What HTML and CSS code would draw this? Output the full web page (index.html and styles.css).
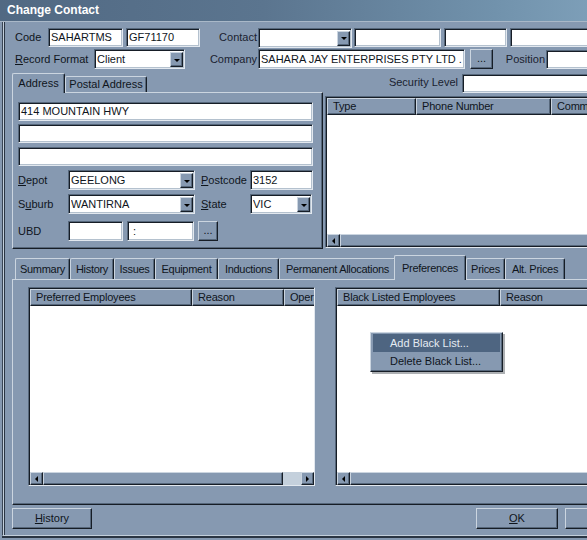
FILE: index.html
```html
<!DOCTYPE html>
<html>
<head>
<meta charset="utf-8">
<title>Change Contact</title>
<link rel="stylesheet" href="styles.css">
</head>
<body>
<div class="win">
  <div class="title">Change Contact</div>
  <div class="client">
    <div class="row r1">
      <span class="lbl l-code">Code</span>
      <div class="sunk in f-code1">SAHARTMS</div>
      <div class="sunk in f-code2">GF71170</div>
      <span class="lbl rt l-contact">Contact</span>
      <div class="sunk combo f-contact"><span class="v"></span><span class="rais dd"></span></div>
      <div class="sunk in f-c2"></div>
      <div class="sunk in f-c3"></div>
      <div class="sunk in f-c4"></div>
    </div>
    <div class="row r2">
      <span class="lbl l-format"><u>R</u>ecord Format</span>
      <div class="sunk combo f-format"><span class="v">Client</span><span class="rais dd"></span></div>
      <span class="lbl rt l-company">Company</span>
      <div class="sunk in f-company">SAHARA JAY ENTERPRISES PTY LTD .</div>
      <div class="rais btn b-dots b-company">...</div>
      <span class="lbl rt l-position">Position</span>
      <div class="sunk in f-position"></div>
    </div>
    <div class="row r3">
      <div class="utabs">
        <div class="tab utab sel t-address">Address</div>
        <div class="tab utab t-postal">Postal Address</div>
      </div>
      <span class="lbl rt l-security">Security Level</span>
      <div class="sunk in f-security"></div>
    </div>
    <div class="mid">
      <div class="addr">
        <div class="sunk in f-line f-line1">414 MOUNTAIN HWY</div>
        <div class="sunk in f-line f-line2"></div>
        <div class="sunk in f-line f-line3"></div>
        <div class="row arow a-depot">
          <span class="lbl l-a"><u>D</u>epot</span>
          <div class="sunk combo f-depot"><span class="v">GEELONG</span><span class="rais dd"></span></div>
          <span class="lbl l-b"><u>P</u>ostcode</span>
          <div class="sunk in f-post">3152</div>
        </div>
        <div class="row arow a-suburb">
          <span class="lbl l-a">S<u>u</u>burb</span>
          <div class="sunk combo f-depot"><span class="v">WANTIRNA</span><span class="rais dd"></span></div>
          <span class="lbl l-b"><u>S</u>tate</span>
          <div class="sunk combo f-state"><span class="v">VIC</span><span class="rais dd"></span></div>
        </div>
        <div class="row arow a-ubd">
          <span class="lbl l-a">UBD</span>
          <div class="sunk in f-ubd1"></div>
          <div class="sunk in f-ubd2">:</div>
          <div class="rais btn b-dots b-ubd">...</div>
        </div>
      </div>
      <div class="sunk list phones">
        <div class="hdr">
          <div class="rais col c-type">Type</div>
          <div class="rais col c-phone">Phone Number</div>
          <div class="rais col c-comm">Comm</div>
        </div>
        <div class="body"></div>
        <div class="hs">
          <div class="rais arr l"></div>
          <div class="rais thumb th-wide"></div>
        </div>
      </div>
    </div>
    <div class="ltabs">
      <div class="tab ltab t-summary">Summary</div>
      <div class="tab ltab t-history">History</div>
      <div class="tab ltab t-issues">Issues</div>
      <div class="tab ltab t-equip">Equipment</div>
      <div class="tab ltab t-induct">Inductions</div>
      <div class="tab ltab t-perm">Permanent Allocations</div>
      <div class="tab ltab sel t-pref">Preferences</div>
      <div class="tab ltab t-prices">Prices</div>
      <div class="tab ltab t-alt">Alt. Prices</div>
    </div>
    <div class="lpanel">
      <div class="sunk list pref">
        <div class="hdr">
          <div class="rais col c-pe">Preferred Employees</div>
          <div class="rais col c-reason1">Reason</div>
          <div class="rais col c-oper">Opera</div>
        </div>
        <div class="body"></div>
        <div class="hs">
          <div class="rais arr l"></div>
          <div class="rais thumb th-pref"></div>
          <div class="track tr-pref"></div>
          <div class="rais arr r"></div>
        </div>
      </div>
      <div class="sunk list black">
        <div class="hdr">
          <div class="rais col c-ble">Black Listed Employees</div>
          <div class="rais col c-reason2">Reason</div>
        </div>
        <div class="body"></div>
        <div class="hs">
          <div class="rais arr l"></div>
          <div class="rais thumb th-wide"></div>
        </div>
        <div class="menu">
          <div class="mi hot">Add Black List...</div>
          <div class="mi">Delete Black List...</div>
        </div>
      </div>
    </div>
    <div class="brow">
      <div class="rais btn b-hist"><span><u>H</u>istory</span></div>
      <div class="rais btn b-ok"><span><u>O</u>K</span></div>
      <div class="rais btn b-cancel"></div>
    </div>
  </div>
</div>
</body>
</html>
```
FILE: styles.css
```css
* { box-sizing: border-box; margin: 0; padding: 0; }
html, body { width: 587px; height: 540px; overflow: hidden; }
body {
  background: #8699b1;
  font-family: "Liberation Sans", Arial, sans-serif;
  font-size: 11px;
  color: #0f151c;
  line-height: 1;
}
u { text-decoration: underline; text-underline-offset: 1px; }

.win { width: 660px; height: 540px; background: #8699b1; }

.title {
  height: 22px;
  padding-left: 7px;
  border-bottom: 1px solid #a9b8c8;
  background: linear-gradient(90deg, #516983 0%, #5b758f 40%, #7192ac 75%, #86a8c1 100%);
  color: #ffffff;
  font-weight: bold;
  font-size: 12px;
  line-height: 21px;
}

.client {
  height: 514px;
  margin-left: 2px;
  padding: 6px 0 0 12px;
  border-left: 1px solid #3a4656;
  border-bottom: 1px solid #c3cfdb;
  box-shadow: inset 1px 0 0 #c3cfdb, inset 2px 0 0 #2a3543, 0 2px 0 #2a3543;
}

/* generic bevels */
.sunk {
  flex: none;
  background: #ffffff;
  border: 1px solid;
  border-color: #56677b #e2e8ef #e2e8ef #56677b;
  box-shadow: inset 1px 1px 0 #161d26, inset -1px -1px 0 #b4c1ce;
}
.rais {
  flex: none;
  background: #8699b1;
  border: 1px solid;
  border-color: #cbd5e0 #161d26 #161d26 #cbd5e0;
  box-shadow: inset -1px -1px 0 #56677b;
}

.row { display: flex; align-items: center; }
.r1 { height: 19px; margin-bottom: 2px; }
.r2 { height: 20px; margin-bottom: 4px; }
.r3 { height: 19px; align-items: flex-start; }

.lbl { flex: none; white-space: nowrap; }
.rt { text-align: right; padding-right: 1px; }

.in {
  height: 19px;
  padding-left: 2px;
  line-height: 17px;
  white-space: nowrap;
  overflow: hidden;
}
.combo {
  height: 20px;
  display: flex;
  padding: 2px 1px 1px 2px;
}
.combo .v { flex: 1; line-height: 15px; white-space: nowrap; overflow: hidden; }
.dd { width: 13px; display: flex; align-items: center; justify-content: center; }
.dd::after {
  content: "";
  border-left: 3px solid transparent;
  border-right: 3px solid transparent;
  border-top: 3px solid #000;
  margin-top: 1px;
}

.btn { height: 21px; display: flex; align-items: center; justify-content: center; white-space: nowrap; }
.b-dots { height: 20px; align-items: flex-end; padding-bottom: 4px; }

/* row 1 */
.l-code { width: 33px; }
.f-code1 { width: 75px; }
.f-code2 { width: 74px; margin-left: 3px; }
.l-contact { width: 58px; color: #1a2230; }
.f-contact { width: 94px; }
.f-c2 { width: 87px; margin-left: 2px; }
.f-c3 { width: 63px; margin-left: 3px; }
.f-c4 { width: 100px; margin-left: 3px; }

/* row 2 */
.l-format { width: 79px; }
.f-format { width: 91px; }
.l-company { width: 73px; color: #1a2230; }
.f-company { width: 207px; height: 20px; line-height: 18px; }
.b-company { width: 23px; margin-left: 5px; }
.l-position { width: 53px; color: #1a2230; }
.f-position { width: 100px; }

/* row 3 */
.utabs { display: flex; align-items: flex-start; width: 132px; margin-left: -3px; height: 19px; }
.l-security { width: 318px; padding-right: 4px; line-height: 19px; color: #1a2230; }
.f-security { width: 130px; margin-top: 1px; }

.tab {
  flex: none;
  display: flex;
  align-items: center;
  justify-content: center;
  white-space: nowrap;
  background: #8699b1;
  border: 1px solid #cbd5e0;
  border-bottom: 0;
  border-right-color: #161d26;
  border-radius: 2px 2px 0 0;
  box-shadow: inset -1px 0 0 #56677b;
}
.tab.sel { position: relative; z-index: 2; }
.utab { height: 16px; margin-top: 3px; }
.utab.sel { height: 20px; margin-top: 0; }
.t-address { width: 53px; }
.t-postal { width: 82px; }

/* middle section */
.mid { display: flex; align-items: flex-start; height: 157px; margin-left: -3px; }
.addr {
  width: 311px;
  height: 157px;
  flex: none;
  border: 1px solid;
  border-color: #cbd5e0 #161d26 #161d26 #cbd5e0;
  box-shadow: inset -1px -1px 0 #56677b;
  padding: 9px 0 0 5px;
}
.f-line { width: 295px; }
.f-line1 { margin-bottom: 3px; }
.f-line2 { margin-bottom: 4px; }
.f-line3 { margin-bottom: 4px; }
.arow { height: 20px; }
.a-depot { margin-bottom: 4px; }
.a-suburb { margin-bottom: 7px; }
.l-a { width: 50px; }
.l-b { width: 55px; padding-left: 6px; }
.f-depot { width: 127px; }
.f-post { width: 63px; height: 20px; line-height: 18px; }
.f-state { width: 62px; }
.f-ubd1 { width: 55px; height: 20px; }
.f-ubd2 { width: 67px; height: 20px; margin-left: 4px; padding-left: 5px; line-height: 18px; }
.b-ubd { width: 20px; margin-left: 4px; }

/* lists */
.list {
  position: relative;
  display: flex;
  flex-direction: column;
  padding: 1px 0 0 1px;
  overflow: hidden;
}
.list .body { flex: 1; background: #ffffff; }
.hdr { display: flex; height: 17px; flex: none; }
.hdr .col {
  height: 17px;
  padding-left: 5px;
  line-height: 15px;
  white-space: nowrap;
  overflow: hidden;
  letter-spacing: -0.2px;
}
.hs { display: flex; height: 13px; flex: none; }
.arr { width: 13px; display: flex; align-items: center; justify-content: center; }
.arr.l::after {
  content: "";
  border-top: 3px solid transparent;
  border-bottom: 3px solid transparent;
  border-right: 3px solid #000;
}
.arr.r::after {
  content: "";
  border-top: 3px solid transparent;
  border-bottom: 3px solid transparent;
  border-left: 3px solid #000;
}
.track { flex: none; background: #c4d0dc; }
.th-wide { width: 400px; }

.phones { width: 300px; height: 152px; margin-left: 2px; margin-top: 4px; }
.c-type { width: 89px; }
.c-phone { width: 135px; }
.c-comm { width: 100px; }

/* lower tabs */
.ltabs { display: flex; align-items: flex-start; height: 24px; margin-top: 6px; }
.ltab { height: 21px; margin-top: 3px; letter-spacing: -0.3px; }
.ltab.sel { height: 25px; margin-top: 0; margin-left: -2px; }
.t-summary { width: 55px; }
.t-history { width: 44px; }
.t-issues { width: 41px; }
.t-equip { width: 63px; }
.t-induct { width: 61px; }
.t-perm { width: 117px; }
.t-pref { width: 72px; }
.t-prices { width: 39px; }
.t-alt { width: 60px; }

.lpanel {
  display: flex;
  align-items: flex-start;
  width: 640px;
  height: 226px;
  margin-left: -3px;
  padding: 7px 0 0 15px;
  border-top: 1px solid #cbd5e0;
  border-left: 1px solid #cbd5e0;
  border-bottom: 1px solid #161d26;
  box-shadow: inset 0 -1px 0 #56677b;
}
.pref { width: 287px; height: 199px; }
.c-pe { width: 162px; }
.c-reason1 { width: 92px; }
.c-oper { width: 60px; letter-spacing: -0.4px; }
.th-pref { width: 240px; }
.tr-pref { width: 18px; }

.black { width: 300px; height: 199px; margin-left: 20px; overflow: visible; }
.c-ble { width: 163px; }
.c-reason2 { width: 120px; }

/* context menu */
.menu {
  position: absolute;
  left: 34px;
  top: 44px;
  width: 133px;
  height: 40px;
  padding: 1px 2px 2px 2px;
  background: #8699b1;
  border: 1px solid;
  border-color: #cbd5e0 #161d26 #161d26 #cbd5e0;
  box-shadow: inset -1px -1px 0 #56677b, 2px 2px 0 rgba(20, 28, 38, 0.35);
  z-index: 5;
}
.mi { height: 18px; line-height: 18px; padding-left: 17px; white-space: nowrap; }
.mi.hot { background: #4e6581; color: #e4ebf2; }

/* bottom buttons */
.brow { display: flex; margin-top: 3px; }
.b-hist { width: 80px; margin-left: -3px; }
.b-ok { width: 82px; margin-left: 384px; }
.b-cancel { width: 82px; margin-left: 7px; }
```
